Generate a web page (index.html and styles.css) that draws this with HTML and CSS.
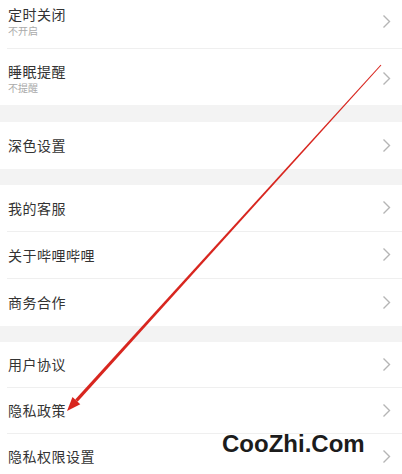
FILE: index.html
```html
<!DOCTYPE html>
<html lang="zh-CN">
<head>
  <meta charset="UTF-8">
  <title>设置</title>
  <link rel="stylesheet" href="styles.css">
</head>
<body>
  <div class="page">
    <div class="settings">
      <div class="group">
        <div class="item tall">
          <div class="text">
            <div class="title">定时关闭</div>
            <div class="sub">不开启</div>
          </div>
          <svg class="chev" viewBox="0 0 9 15"><polyline points="1.5,1.5 7.5,7.5 1.5,13.5"/></svg>
        </div>
        <div class="item tall">
          <div class="text">
            <div class="title">睡眠提醒</div>
            <div class="sub">不提醒</div>
          </div>
          <svg class="chev" viewBox="0 0 9 15"><polyline points="1.5,1.5 7.5,7.5 1.5,13.5"/></svg>
        </div>
      </div>

      <div class="group">
        <div class="item">
          <div class="title">深色设置</div>
          <svg class="chev" viewBox="0 0 9 15"><polyline points="1.5,1.5 7.5,7.5 1.5,13.5"/></svg>
        </div>
      </div>

      <div class="group">
        <div class="item">
          <div class="title">我的客服</div>
          <svg class="chev" viewBox="0 0 9 15"><polyline points="1.5,1.5 7.5,7.5 1.5,13.5"/></svg>
        </div>
        <div class="item">
          <div class="title">关于哔哩哔哩</div>
          <svg class="chev" viewBox="0 0 9 15"><polyline points="1.5,1.5 7.5,7.5 1.5,13.5"/></svg>
        </div>
        <div class="item">
          <div class="title">商务合作</div>
          <svg class="chev" viewBox="0 0 9 15"><polyline points="1.5,1.5 7.5,7.5 1.5,13.5"/></svg>
        </div>
      </div>

      <div class="group compact">
        <div class="item">
          <div class="title">用户协议</div>
          <svg class="chev" viewBox="0 0 9 15"><polyline points="1.5,1.5 7.5,7.5 1.5,13.5"/></svg>
        </div>
        <div class="item">
          <div class="title">隐私政策</div>
          <svg class="chev" viewBox="0 0 9 15"><polyline points="1.5,1.5 7.5,7.5 1.5,13.5"/></svg>
        </div>
        <div class="item">
          <div class="title">隐私权限设置</div>
          <svg class="chev" viewBox="0 0 9 15"><polyline points="1.5,1.5 7.5,7.5 1.5,13.5"/></svg>
        </div>
      </div>
    </div>

    <!-- annotation arrow drawn over the screenshot -->
    <svg class="arrow" viewBox="0 0 402 474">
      <polygon points="380.6,64.7 381.4,65.3 77.6,401.8 75.2,399.4"/>
      <polygon points="67,411 80.3,404.2 72.5,397"/>
    </svg>

    <div class="watermark">CooZhi.Com</div>
  </div>
</body>
</html>
```

FILE: styles.css
```css
body {
  margin: 0;
  background-color: #fff;
  font-family: "Noto Sans CJK SC", "Noto Sans", sans-serif;
}

.page {
  position: relative;
  width: 402px;
  height: 474px;
  overflow: hidden;
}

.settings {
  margin-top: -8px;
  background-color: #f3f3f3;
}

.group {
  background-color: #fff;
  margin-bottom: 16px;
}

.group:first-child {
  margin-bottom: 17px;
}

.item {
  display: flex;
  align-items: center;
  justify-content: space-between;
  height: 45px;
  margin-left: 7px;
  padding-left: 1px;
  padding-right: 11px;
  padding-bottom: 1px;
  border-bottom: 1px solid #efefef;
}

.item:last-child {
  border-bottom: none;
  height: 46px;
}

.compact .item {
  height: 44px;
}

.item.tall {
  height: auto;
  padding-top: 12px;
  padding-bottom: 10px;
}

.item.tall:last-child {
  height: auto;
}

.title {
  font-size: 14px;
  line-height: 20px;
  color: #333;
  letter-spacing: 0.5px;
}

.sub {
  font-size: 10px;
  line-height: 14px;
  color: #aaa;
}

.chev {
  width: 9px;
  height: 15px;
  fill: none;
  stroke: #b5b5b5;
  stroke-width: 1.4;
}

.arrow {
  position: absolute;
  top: 0;
  left: 0;
  width: 402px;
  height: 474px;
  fill: #d8261f;
}

.watermark {
  position: absolute;
  left: 222px;
  top: 431px;
  font-family: "Liberation Sans", Arial, sans-serif;
  font-weight: bold;
  font-size: 24px;
  line-height: 26px;
  color: #1c1c1c;
}
```
